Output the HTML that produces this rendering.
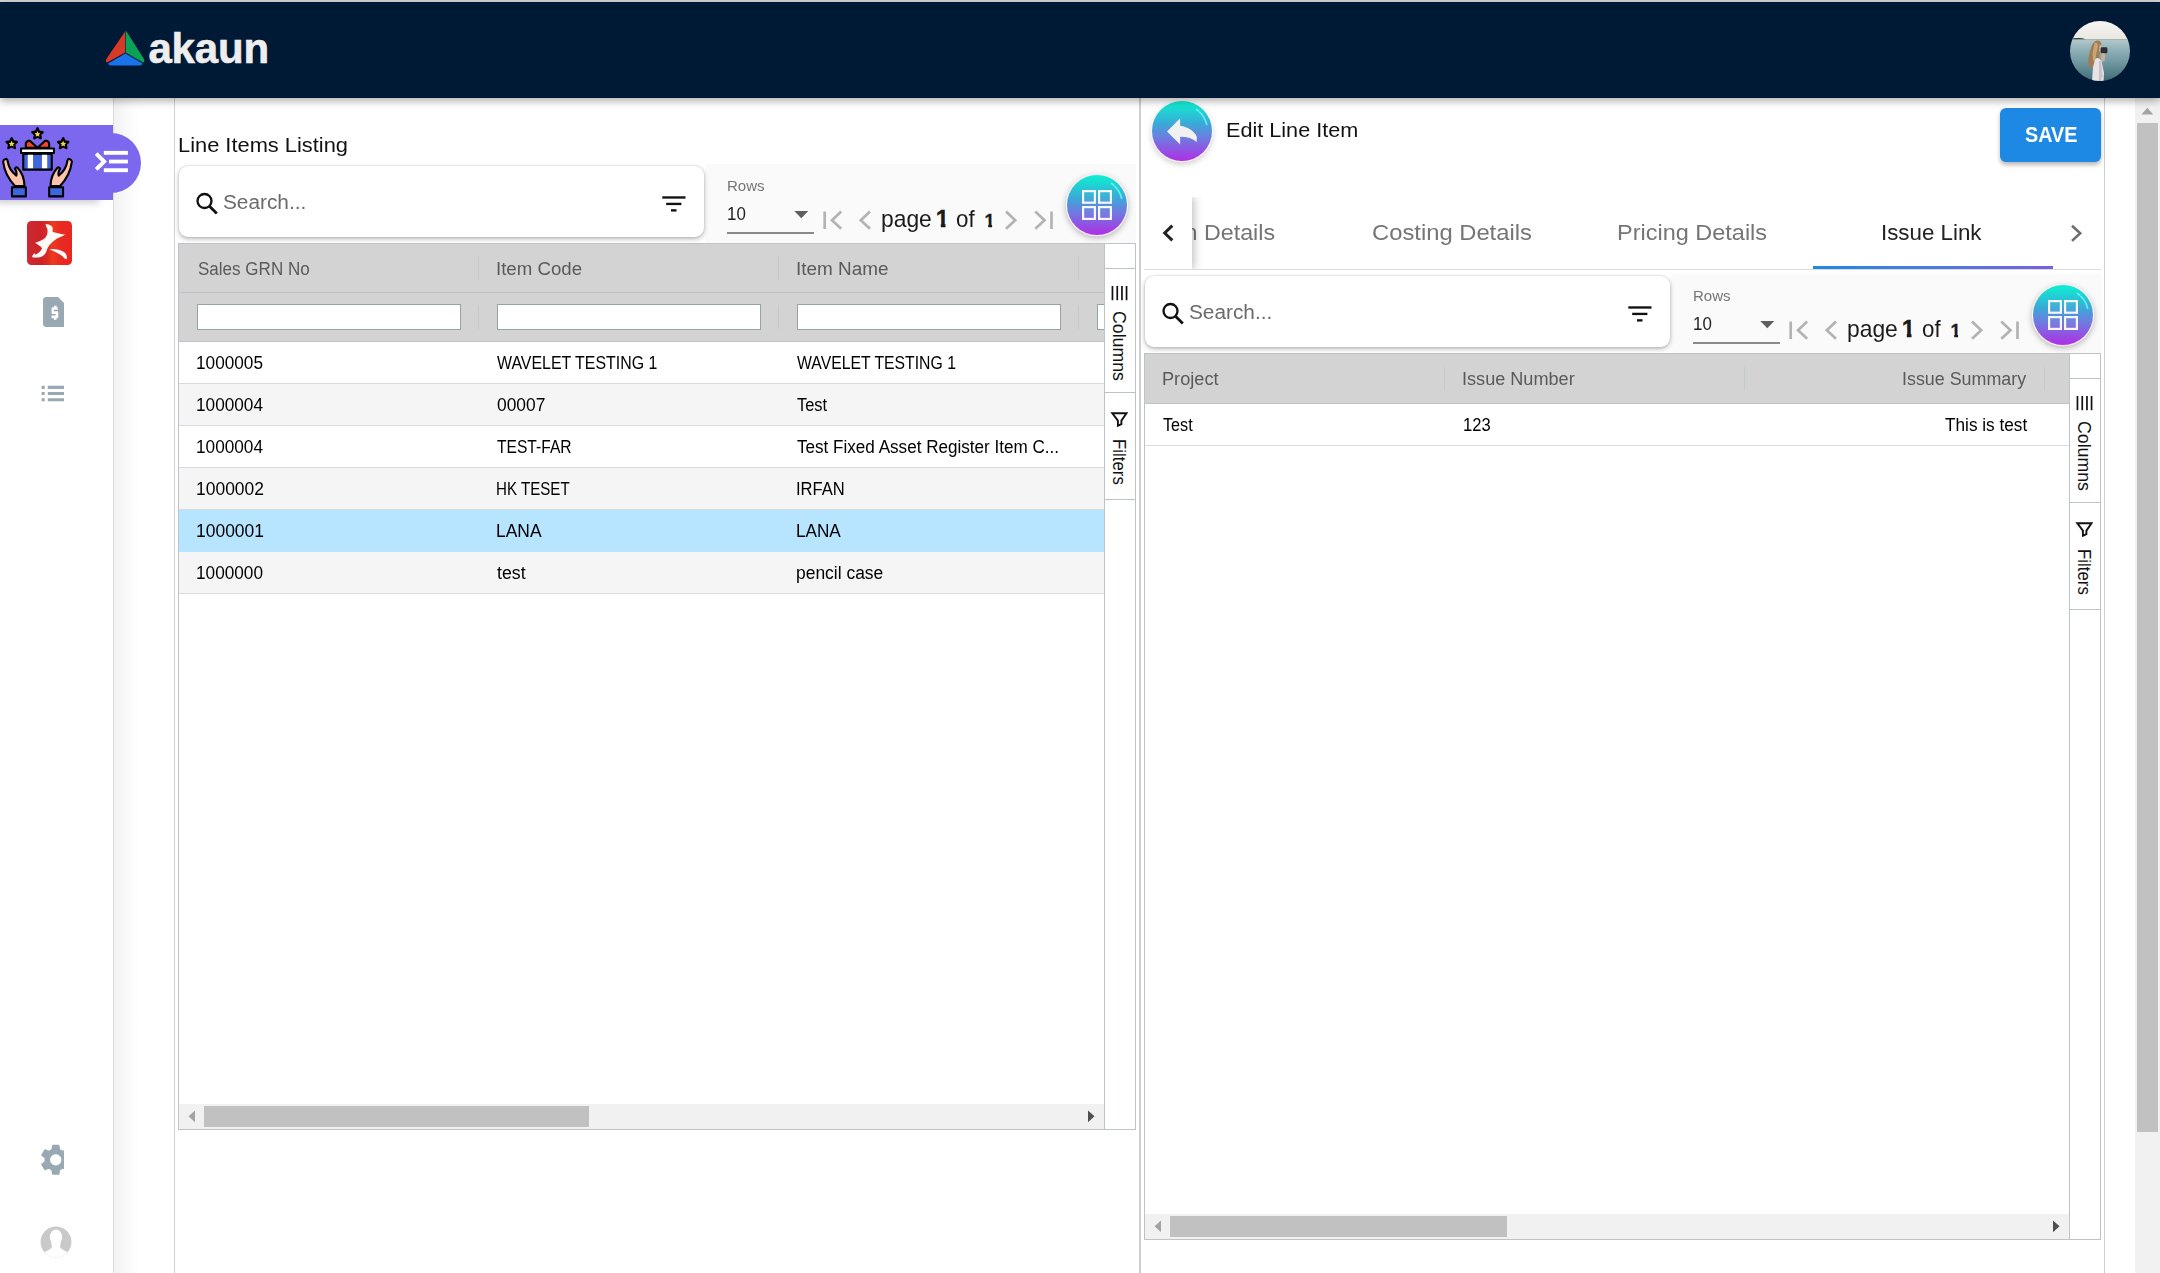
<!DOCTYPE html>
<html lang="en">
<head>
<meta charset="utf-8">
<title>akaun - Line Items</title>
<style>
*{box-sizing:border-box;margin:0;padding:0}
html,body{width:2160px;height:1273px;overflow:hidden;background:#fff}
body{font-family:"Liberation Sans",sans-serif;color:#181d1f;position:relative}
.abs{position:absolute}
/* top */
#topstrip{left:0;top:0;width:2160px;height:2px;background:#d4d4d4}
#header{left:0;top:2px;width:2160px;height:96px;background:#001935;box-shadow:0 3px 8px rgba(0,0,0,.32);z-index:20}
#brand{left:148.400px;top:21.900px;font-weight:700;font-size:42px;line-height:50px;letter-spacing:-.150px;color:#eee;-webkit-text-stroke:.6px #eee}
/* sidebar */
#sidebar{left:0;top:98px;width:114px;height:1175px;background:#fff;border-right:1px solid #dcdcdc;z-index:5}
#gutter{left:114px;top:98px;width:60px;height:1175px;background:linear-gradient(90deg,#f2f2f2 0,#f6f6f6 12%,#fbfbfb 26%,#fff 42%)}
#lline{left:174px;top:98px;width:1px;height:1175px;background:#d2d2d2}
#badge{left:0;top:125px;width:113px;height:75px;background:#7b68ee;box-shadow:-10px 6px 8px -4px rgba(0,0,0,.24);z-index:7}
#pill{left:100px;top:133px;width:41px;height:60px;background:#7b68ee;border-radius:0 30px 30px 0;z-index:8}
/* text helpers */
.pop{font-family:"Liberation Sans",sans-serif;color:#111;white-space:nowrap}
.title{font-size:21px;line-height:28px;letter-spacing:.35px}
/* search card */
.search{background:#fff;border-radius:9px;box-shadow:0 2px 5px rgba(0,0,0,.28),0 0 2px rgba(0,0,0,.18);width:525px;height:71px}
.search .ph{position:absolute;left:44px;top:22px;font-size:20px;line-height:28px;color:#6b6b6b;letter-spacing:.5px}
.pgbg{background:#fafafa;width:431px;height:79px}
.rows{font-size:14.5px;line-height:18px;color:#757575;letter-spacing:.3px}
.ten{font-size:19px;line-height:22px;color:#222}
.uline{height:2px;background:#8a8a8a;width:87px}
.pg{font-size:21.5px;line-height:28px;color:#1b1b1b;white-space:nowrap;letter-spacing:.2px}
.pg b{font-weight:700}
.fab{width:60px;height:60px;border-radius:50%;background:linear-gradient(180deg,#0af0d2 0%,#10ead0 4%,#3aa9d8 38%,#6f7be0 62%,#b02ee6 100%);box-shadow:0 0 0 1.300px rgba(255,245,255,.85),0 2px 6px 1px rgba(0,0,0,.28)}
/* grid */
.grid{border:1px solid #bdc3c7;background:#fff;overflow:hidden}
.hdr{left:0;top:0;background:#d3d3d3;border-bottom:1px solid #bdc3c7}
.hc{font-size:17.5px;line-height:24px;color:#5b5b5b;white-space:nowrap;font-weight:400}
.sep{width:1px;background:#c4c9cc}
.fin{height:26px;background:#fff;border:1px solid #95a5a6}
.row{left:0;height:42px;border-bottom:1px solid #d9dcde;width:100%}
.row.alt{background:#f5f5f5}
.row.sel{background:#b7e4ff;border-bottom-color:#b7e4ff}
.cell{top:0;font-size:17.3px;line-height:41px;color:#000;white-space:nowrap}
.hsb{background:#f1f1f1;height:25px}
.thumb{background:#c1c1c1;top:2.400px;height:20.600px}
.side{background:#fff;border-left:1px solid #bdc3c7;width:31px}
.sbtn{left:0;width:30px;border-top:1px solid #bdc3c7;border-bottom:1px solid #bdc3c7;background:#fff}
.vtxt{position:absolute;left:15px;transform-origin:0 0;transform:rotate(90deg);font-size:18.200px;line-height:22px;white-space:nowrap;color:#111}
/* tabs */
.tab{font-size:22px;line-height:30px;color:#757575;white-space:nowrap;letter-spacing:.45px}
</style>
</head>
<body>
<div id="topstrip" class="abs"></div>
<div id="header" class="abs">
  <svg class="abs" style="left:104px;top:28px" width="42" height="38" viewBox="0 0 42 38">
    <path d="M20.6 2.2 Q21.2 1 21.2 1 L21.2 22.6 L3.2 32.6 Q1 31.6 2.3 28.9 Z" fill="#d63a27"/>
    <path d="M21.8 1 Q22.6 1.3 23 2.2 L40 29 Q41 31.6 39 32.6 L21.8 22.6 Z" fill="#09a257"/>
    <path d="M21.4 23.4 L38.6 33.4 Q37.6 35.4 35.6 35.4 L7 35.4 Q4.8 35.4 4 33.4 Z" fill="#1a73e8"/>
  </svg>
  <div id="brand" class="abs">akaun</div>
  <svg class="abs" style="left:2070px;top:19px" width="60" height="60" viewBox="0 0 60 60">
    <defs>
      <clipPath id="pc"><circle cx="30" cy="30" r="30"/></clipPath>
      <linearGradient id="sea" x1="0" y1="0" x2="0" y2="1"><stop offset="0" stop-color="#b4c8cb"/><stop offset=".25" stop-color="#8fb0b7"/><stop offset=".6" stop-color="#6b939c"/><stop offset="1" stop-color="#3f6b75"/></linearGradient>
      <linearGradient id="sky" x1="0" y1="0" x2="0" y2="1"><stop offset="0" stop-color="#f6f5f2"/><stop offset="1" stop-color="#ebe7e1"/></linearGradient>
      <filter id="bl" x="-10%" y="-10%" width="120%" height="120%"><feGaussianBlur stdDeviation=".55"/></filter>
    </defs>
    <g clip-path="url(#pc)">
      <rect width="60" height="18.600" fill="url(#sky)"/>
      <rect y="18.400" width="60" height="42" fill="url(#sea)"/>
      <g filter="url(#bl)">
        <path d="M1 18.300 Q4 16.600 8 17 Q12 16.600 15.500 18.300 Z" fill="#34433f"/>
        <path d="M27 19.600 Q31 19.200 31.300 23.500 L30 30 L27.500 45.500 Q22 48.500 19 45 Q17 38 20.500 29 Q22 21 27 19.600Z" fill="#a07c54"/>
        <path d="M24.500 22 Q27.500 20.500 28 25 Q26 34 24.500 42 Q22 38 22.800 31 Z" fill="#caa574"/>
        <path d="M29.800 23.500 L31.600 25.500 L31.200 30 L29 30.500Z" fill="#dcb9a0"/>
        <rect x="30.600" y="26.300" width="6.800" height="6.200" rx="1.400" fill="#2a2e35"/>
        <path d="M31.500 32 L35.500 32.500 L34.600 40 L31 41Z" fill="#d3ad92"/>
        <path d="M25.500 37.500 Q29 36 31.500 40 L34 52 L33.500 61 L22 61 L23 46Z" fill="#e7e3e4"/>
        <path d="M29 40 L31 40 L32.500 55 L30.500 61 L29 61Z" fill="#c8c2c6"/>
      </g>
    </g>
  </svg>
</div>

<div id="sidebar" class="abs"></div>
<div id="gutter" class="abs"></div>
<div id="lline" class="abs"></div>
<div id="pill" class="abs"></div>
<div id="badge" class="abs"></div>

<!-- gift / hands icon + menu icon, drawn in zoom coords (14.4x) -->
<svg class="abs" style="left:0;top:120px;z-index:9" width="150" height="85" viewBox="0 0 2160 1224">
  <g stroke="#000" stroke-width="30" stroke-linejoin="round" stroke-linecap="round">
    <g fill="#000" stroke-width="34">
      <path d="M540 120l22 48 52 6-39 36 11 52-46-26-46 26 11-52-39-36 52-6z"/>
      <path d="M168 262l22 48 52 6-39 36 11 52-46-26-46 26 11-52-39-36 52-6z"/>
      <path d="M910 262l22 48 52 6-39 36 11 52-46-26-46 26 11-52-39-36 52-6z"/>
    </g>
    <g fill="#f4d548" stroke="none">
      <path d="M540 158l13 28 30 4-22 21 6 30-27-15-27 15 6-30-22-21 30-4z"/>
      <path d="M168 300l13 28 30 4-22 21 6 30-27-15-27 15 6-30-22-21 30-4z"/>
      <path d="M910 300l13 28 30 4-22 21 6 30-27-15-27 15 6-30-22-21 30-4z"/>
    </g>
    <path d="M540 400 L430 300 Q385 290 372 340 L372 400 Z" fill="#f2452d"/>
    <path d="M540 400 L650 300 Q695 290 708 340 L708 400 Z" fill="#f2452d"/>
    <rect x="335" y="490" width="410" height="225" fill="#3f67dd"/>
    <rect x="303" y="410" width="474" height="66" fill="#fff"/>
    <path d="M75 565 Q100 545 110 590 Q130 720 235 800 Q250 760 215 700 Q225 670 255 690 Q350 790 352 950 L215 950 Q70 800 45 600 Q50 570 75 565Z" fill="#fbc4ab"/>
    <path d="M1005 565 Q980 545 970 590 Q950 720 845 800 Q830 760 865 700 Q855 670 825 690 Q730 790 728 950 L865 950 Q1010 800 1035 600 Q1030 570 1005 565Z" fill="#fbc4ab"/>
    <rect x="172" y="968" width="200" height="132" fill="#3f67dd"/>
    <rect x="708" y="968" width="200" height="132" fill="#3f67dd"/>
  </g>
  <rect x="400" y="500" width="76" height="195" fill="#fff"/>
  <rect x="604" y="500" width="76" height="195" fill="#fff"/>
  <g fill="#fff">
    <path d="M1365 505 L1405 465 L1540 598 L1405 732 L1365 692 L1460 598 Z"/>
    <rect x="1495" y="445" width="347" height="56"/>
    <rect x="1570" y="571" width="272" height="55"/>
    <rect x="1495" y="695" width="347" height="56"/>
  </g>
</svg>

<!-- red app icon -->
<div class="abs" style="left:27px;top:221px;width:45px;height:43.500px;border-radius:4.500px;z-index:6;background:linear-gradient(90deg,#cc2a31 0,#cd2328 30%,#d92a23 45%,#ee3a1f 57%,#e72a22 75%,#ea2620 100%)"></div>
<svg class="abs" style="left:20px;top:212px;z-index:7" width="60" height="60" viewBox="0 0 1273 1273">
  <g fill="#fffaf8">
    <path d="M545 262 C600 250 680 290 692 330 C700 370 680 400 700 425 C780 450 880 470 962 480 C900 520 790 555 720 610 C650 670 600 720 575 790 C550 880 500 950 400 965 L285 968 C255 960 250 940 270 915 L305 870 L325 905 C400 880 440 830 470 770 C430 720 370 690 320 655 C380 625 470 600 520 560 C570 520 590 450 585 380 C580 330 540 300 545 262 Z"/>
    <path d="M630 790 C730 775 850 800 930 850 C990 890 1010 960 985 1000 C960 1005 940 980 900 940 C830 880 740 840 630 790 Z"/>
  </g>
</svg>

<!-- clipped material icons -->
<div class="abs" style="left:37px;top:290px;width:27px;height:140px;overflow:hidden;z-index:6">
  <svg class="abs" style="left:0.100px;top:4px" width="36" height="36" viewBox="0 0 24 24"><path fill="#98a9b4" d="M14 2H6c-1.100 0-2 .9-2 2v16c0 1.100.9 2 2 2h12c1.100 0 2-.9 2-2V8l-6-6z"/><path fill="#fff" d="M13.800 10.500h-2.600v1h2.200c.5 0 .8.400.8.800v3c0 .5-.4.800-.8.800H13v1h-1.700v-1H9.700v-1.700h2.800v-1h-2c-.5 0-.8-.4-.8-.8v-2.900c0-.5.4-.8.800-.8h.8v-1H13v1h.8v1.600z"/></svg>
  <svg class="abs" style="left:0.100px;top:85.300px" width="37" height="37" viewBox="0 0 24 24"><path fill="#98a9b4" d="M3 13h2v-2H3v2zm0 4h2v-2H3v2zm0-8h2V7H3v2zm4 4h14v-2H7v2zm0 4h14v-2H7v2zM7 7v2h14V7H7z"/></svg>
</div>
<div class="abs" style="left:36px;top:1138px;width:28px;height:44px;overflow:hidden;z-index:6">
  <svg class="abs" style="left:0.750px;top:3.200px" width="37.500" height="37.500" viewBox="0 0 24 24"><path fill="#98a9b4" d="M19.140,12.940c0.040-0.300,0.060-0.610,0.060-0.940c0-0.320-0.020-0.640-0.070-0.940l2.030-1.580c0.180-0.140,0.230-0.410,0.120-0.610 l-1.920-3.320c-0.120-0.220-0.370-0.290-0.590-0.220l-2.390,0.960c-0.500-0.380-1.030-0.700-1.620-0.940L14.400,2.810c-0.040-0.240-0.240-0.410-0.480-0.410 h-3.840c-0.240,0-0.430,0.170-0.470,0.410L9.250,5.350C8.660,5.590,8.120,5.920,7.630,6.290L5.240,5.330c-0.220-0.080-0.470,0-0.590,0.220L2.740,8.870 C2.620,9.080,2.660,9.340,2.860,9.480l2.030,1.580C4.840,11.360,4.800,11.690,4.800,12s0.020,0.640,0.070,0.940l-2.030,1.580 c-0.180,0.140-0.230,0.410-0.120,0.610l1.920,3.320c0.120,0.220,0.370,0.290,0.590,0.220l2.390-0.960c0.500,0.380,1.030,0.700,1.620,0.940l0.360,2.540 c0.050,0.240,0.240,0.410,0.480,0.410h3.840c0.240,0,0.440-0.170,0.470-0.410l0.360-2.540c0.590-0.240,1.130-0.560,1.620-0.940l2.390,0.960 c0.220,0.080,0.470,0,0.590-0.220l1.920-3.320c0.120-0.220,0.070-0.470-0.120-0.610L19.140,12.940z M12,15.600c-1.980,0-3.600-1.620-3.600-3.600 s1.620-3.600,3.600-3.600s3.600,1.620,3.600,3.600S13.980,15.600,12,15.600z"/></svg>
</div>
<!-- default avatar -->
<svg class="abs" style="left:40.300px;top:1226.200px;z-index:6" width="32" height="32" viewBox="0 0 32 32">
  <defs><clipPath id="avc"><circle cx="16" cy="16" r="15.400"/></clipPath></defs>
  <circle cx="16" cy="16" r="15.400" fill="#c9c9c9"/>
  <g clip-path="url(#avc)" fill="#fff">
    <ellipse cx="16" cy="11" rx="6.200" ry="7.600"/>
    <path d="M11.300 14 Q11 19.500 12.200 20.500 Q10.500 24 3 26.400 L0 33 L32 33 L29 26.400 Q21.500 24 19.800 20.500 Q21 19.500 20.700 14 Z"/>
  </g>
</svg>


<div class="abs" style="left:177.93px;top:131.80px;font-size:20.4px;line-height:27px;transform-origin:0 0;transform:scaleX(1.0710);color:#111;z-index:3;white-space:nowrap">Line Items Listing</div>
<div class="abs pgbg" style="left:705px;top:164px"></div>
<div class="abs" style="left:727.13px;top:176.70px;font-size:14px;line-height:18px;transform-origin:0 0;transform:scaleX(1.0733);color:#757575;z-index:3;white-space:nowrap">Rows</div>
<div class="abs" style="left:727.09px;top:201.80px;font-size:18.6px;line-height:24px;transform-origin:0 0;transform:scaleX(0.9100);color:#222;z-index:3;white-space:nowrap">10</div>
<svg class="abs" style="left:794px;top:211px" width="15" height="8" viewBox="0 0 15 8"><path d="M0.3 0 H14.3 L7.3 7.2 Z" fill="#5f5f5f"/></svg>
<div class="abs uline" style="left:727px;top:231.7px"></div>
<svg class="abs" style="left:820px;top:208px" width="240" height="24" viewBox="0 0 240 24" fill="none" stroke="#b3b3b3" stroke-width="2.700"><path d="M4.7 3.5V21"/><path d="M21.2 3.6 L12 12.2 L21.2 20.8"/><path d="M50 3.6 L40.8 12.2 L50 20.8"/><path d="M186 3.6 L195.200 12.200 L186 20.800"/><path d="M215.300 3.600 L224.500 12.200 L215.300 20.800"/><path d="M231.500 3.500V21"/></svg>
<div class="abs" style="left:880.85px;top:202.80px;font-size:24px;line-height:31px;transform-origin:0 0;transform:scaleX(0.9511);color:#1b1b1b;z-index:3;white-space:nowrap">page</div>
<div class="abs" style="left:935.87px;top:202.80px;font-size:23.77px;line-height:31px;font-weight:700;color:#1b1b1b;z-index:3;-webkit-text-stroke:0.35px #1b1b1b;clip-path:polygon(0 0,9.63px 0,9.63px 100%,4.94px 100%,4.94px 52%,0 52%)">1</div>
<div class="abs" style="left:955.67px;top:202.80px;font-size:24px;line-height:31px;transform-origin:0 0;transform:scaleX(0.9303);color:#1b1b1b;z-index:3;white-space:nowrap">of</div>
<div class="abs" style="left:984.59px;top:208.80px;font-size:18.12px;line-height:24px;font-weight:700;color:#1b1b1b;z-index:3;-webkit-text-stroke:0.3px #1b1b1b;clip-path:polygon(0 0,7.51px 0,7.51px 100%,3.66px 100%,3.66px 52%,0 52%)">1</div>
<div class="abs fab" style="left:1067px;top:175px"></div>
<svg class="abs" style="left:1067px;top:175px" width="60" height="60" viewBox="0 0 60 60"><g fill="rgba(255,255,255,.04)" stroke="#f6f6f6" stroke-width="2.200"><rect x="16.100" y="16.100" width="11.800" height="11.600"/><rect x="32.100" y="16.100" width="11.800" height="11.600"/><rect x="16.100" y="32.100" width="11.800" height="11.800"/><rect x="32.100" y="32.100" width="11.800" height="11.800"/></g><path d="M44.500 8.500 Q52.500 14 54.700 23.500" fill="none" stroke="rgba(130,255,250,.7)" stroke-width="1.700" stroke-dasharray="2.500 1.800 30" stroke-linecap="round"/></svg>
<div class="abs" style="left:223.10px;top:189.30px;font-size:20px;line-height:26px;transform-origin:0 0;transform:scaleX(1.0397);color:#6b6b6b;z-index:4;white-space:nowrap">Search...</div>
<div class="abs search" style="left:179px;top:166px">
  <svg class="abs" style="left:14.200px;top:24px" width="28" height="28" viewBox="0 0 28 28"><circle cx="11.500" cy="11" r="7" fill="none" stroke="#111" stroke-width="2.300"/><path d="M16.500 16.200 L23.800 23.500" stroke="#111" stroke-width="2.800" stroke-linecap="butt"/></svg>
  <svg class="abs" style="left:480px;top:28px" width="30" height="20" viewBox="0 0 30 20"><g fill="#111"><rect x="3.300" y="2.300" width="23.200" height="2.350"/><rect x="7.200" y="8.750" width="15.200" height="2.350"/><rect x="12" y="15.200" width="5.500" height="2.350"/></g></svg>
</div>
<div class="abs grid" style="left:178px;top:243px;width:958px;height:887px">
<div class="abs hdr" style="width:925px;height:49px"></div>
<div class="abs hdr" style="top:49px;width:925px;height:49px"></div>
<div class="abs sep" style="left:299px;top:12px;height:24px"></div>
<div class="abs sep" style="left:299px;top:61px;height:24px"></div>
<div class="abs fin" style="left:18px;top:60px;width:264px"></div>
<div class="abs sep" style="left:599px;top:12px;height:24px"></div>
<div class="abs sep" style="left:599px;top:61px;height:24px"></div>
<div class="abs fin" style="left:318px;top:60px;width:264px"></div>
<div class="abs sep" style="left:899px;top:12px;height:24px"></div>
<div class="abs sep" style="left:899px;top:61px;height:24px"></div>
<div class="abs fin" style="left:618px;top:60px;width:264px"></div>
<div class="abs fin" style="left:918px;top:60px;width:264px"></div>
<div class="abs row " style="top:98px"></div>
<div class="abs row alt" style="top:140px"></div>
<div class="abs row " style="top:182px"></div>
<div class="abs row alt" style="top:224px"></div>
<div class="abs row sel" style="top:266px"></div>
<div class="abs row alt" style="top:308px"></div>
<div class="abs hsb" style="left:0;top:860px;width:925px"><svg class="abs" style="left:9px;top:6px" width="8" height="13" viewBox="0 0 8 13"><path d="M7 0.500 V12.200 L0.500 6.300Z" fill="#a3a3a3"/></svg><div class="abs thumb" style="left:25px;width:385px"></div><svg class="abs" style="left:908px;top:6px" width="8" height="13" viewBox="0 0 8 13"><path d="M1 0.500 V12.200 L7.500 6.300Z" fill="#505050"/></svg></div>
<div class="abs side" style="left:925px;top:0;height:885px">
<div class="abs sbtn" style="top:24px;height:125px"><svg class="abs" style="left:5.700px;top:16.600px" width="18" height="15" viewBox="0 0 18 15"><g fill="#111"><rect x="0.600" y="0" width="1.700" height="14.200"/><rect x="5.400" y="0" width="1.700" height="14.200"/><rect x="10.100" y="0" width="1.700" height="14.200"/><rect x="14.700" y="0" width="1.700" height="14.200"/></g></svg><div class="vtxt" style="left:25.300px;top:41.500px;transform:rotate(90deg) scaleX(.975)">Columns</div></div>
<div class="abs sbtn" style="top:148px;height:108px"><svg class="abs" style="left:5px;top:17px" width="20" height="18" viewBox="0 0 20 18"><path d="M2.300 3.300 H16.500 L11.400 10.600 V14.200 L7.900 15.700 V10.600 Z" fill="none" stroke="#111" stroke-width="1.900" stroke-linejoin="miter"/></svg><div class="vtxt" style="left:25.300px;top:45.800px;transform:rotate(90deg) scaleX(.925)">Filters</div></div>
</div>
</div>
<div class="abs" style="left:197.60px;top:257.80px;font-size:17.6px;line-height:23px;transform-origin:0 0;transform:scaleX(0.9681);color:#5a5a5a;z-index:3;white-space:nowrap">Sales GRN No</div>
<div class="abs" style="left:495.74px;top:257.80px;font-size:17.6px;line-height:23px;transform-origin:0 0;transform:scaleX(1.0607);color:#5a5a5a;z-index:3;white-space:nowrap">Item Code</div>
<div class="abs" style="left:796.02px;top:257.80px;font-size:17.6px;line-height:23px;transform-origin:0 0;transform:scaleX(1.0754);color:#5a5a5a;z-index:3;white-space:nowrap">Item Name</div>
<div class="abs" style="left:196.32px;top:351.70px;font-size:17.6px;line-height:23px;transform-origin:0 0;transform:scaleX(0.9777);color:#000;z-index:3;white-space:nowrap">1000005</div>
<div class="abs" style="left:497.00px;top:351.70px;font-size:17.6px;line-height:23px;transform-origin:0 0;transform:scaleX(0.9044);color:#000;z-index:3;white-space:nowrap">WAVELET TESTING 1</div>
<div class="abs" style="left:797.20px;top:351.70px;font-size:17.6px;line-height:23px;transform-origin:0 0;transform:scaleX(0.8965);color:#000;z-index:3;white-space:nowrap">WAVELET TESTING 1</div>
<div class="abs" style="left:196.32px;top:393.70px;font-size:17.6px;line-height:23px;transform-origin:0 0;transform:scaleX(0.9777);color:#000;z-index:3;white-space:nowrap">1000004</div>
<div class="abs" style="left:497.00px;top:393.70px;font-size:17.6px;line-height:23px;transform-origin:0 0;transform:scaleX(0.9888);color:#000;z-index:3;white-space:nowrap">00007</div>
<div class="abs" style="left:797.20px;top:393.70px;font-size:17.6px;line-height:23px;transform-origin:0 0;transform:scaleX(0.9327);color:#000;z-index:3;white-space:nowrap">Test</div>
<div class="abs" style="left:196.32px;top:435.70px;font-size:17.6px;line-height:23px;transform-origin:0 0;transform:scaleX(0.9777);color:#000;z-index:3;white-space:nowrap">1000004</div>
<div class="abs" style="left:497.00px;top:435.70px;font-size:17.6px;line-height:23px;transform-origin:0 0;transform:scaleX(0.8877);color:#000;z-index:3;white-space:nowrap">TEST-FAR</div>
<div class="abs" style="left:797.20px;top:435.70px;font-size:17.6px;line-height:23px;transform-origin:0 0;transform:scaleX(0.9713);color:#000;z-index:3;white-space:nowrap">Test Fixed Asset Register Item C...</div>
<div class="abs" style="left:196.31px;top:477.70px;font-size:17.6px;line-height:23px;transform-origin:0 0;transform:scaleX(0.9924);color:#000;z-index:3;white-space:nowrap">1000002</div>
<div class="abs" style="left:496.14px;top:477.70px;font-size:17.6px;line-height:23px;transform-origin:0 0;transform:scaleX(0.8595);color:#000;z-index:3;white-space:nowrap">HK TESET</div>
<div class="abs" style="left:796.26px;top:477.70px;font-size:17.6px;line-height:23px;transform-origin:0 0;transform:scaleX(0.9400);color:#000;z-index:3;white-space:nowrap">IRFAN</div>
<div class="abs" style="left:196.31px;top:519.70px;font-size:17.6px;line-height:23px;transform-origin:0 0;transform:scaleX(0.9924);color:#000;z-index:3;white-space:nowrap">1000001</div>
<div class="abs" style="left:496.01px;top:519.70px;font-size:17.6px;line-height:23px;transform-origin:0 0;transform:scaleX(0.9906);color:#000;z-index:3;white-space:nowrap">LANA</div>
<div class="abs" style="left:796.22px;top:519.70px;font-size:17.6px;line-height:23px;transform-origin:0 0;transform:scaleX(0.9751);color:#000;z-index:3;white-space:nowrap">LANA</div>
<div class="abs" style="left:196.32px;top:561.70px;font-size:17.6px;line-height:23px;transform-origin:0 0;transform:scaleX(0.9777);color:#000;z-index:3;white-space:nowrap">1000000</div>
<div class="abs" style="left:497.00px;top:561.70px;font-size:17.6px;line-height:23px;transform-origin:0 0;transform:scaleX(1.0081);color:#000;z-index:3;white-space:nowrap">test</div>
<div class="abs" style="left:796.21px;top:561.70px;font-size:17.6px;line-height:23px;transform-origin:0 0;transform:scaleX(0.9915);color:#000;z-index:3;white-space:nowrap">pencil case</div>

<div class="abs" style="left:1139px;top:98px;width:2px;height:1175px;background:#cfcfcf"></div>
<div class="abs" style="left:2104px;top:98px;width:1px;height:1175px;background:#cfcfcf"></div>
<div class="abs" style="left:2135px;top:98px;width:25px;height:1175px;background:#f1f1f1"></div>
<div class="abs" style="left:2137px;top:123px;width:21px;height:1009px;background:#c1c1c1"></div>
<svg class="abs" style="left:2141px;top:107px" width="13" height="8" viewBox="0 0 13 8"><path d="M0.500 7.500 H12.200 L6.300 0.700Z" fill="#a3a3a3"/></svg>
<div class="abs fab" style="left:1152px;top:101px;box-shadow:0 0 0 1.300px rgba(255,245,255,.85),0 3px 6px rgba(0,0,0,.22)"></div>
<svg class="abs" style="left:1152px;top:101px" width="60" height="60" viewBox="0 0 60 60"><defs><clipPath id="rc"><rect x="0" y="0" width="18.850" height="24"/></clipPath></defs><g transform="translate(9.400,7.900) scale(1.875)" clip-path="url(#rc)"><path fill="#f1f1f1" d="M10 9V5l-7 7 7 7v-4.100c5 0 8.500 1.600 11 5.100-1-5-4-10-11-11z"/></g><path d="M44.500 8.500 Q52.500 14 54.700 23.500" fill="none" stroke="rgba(130,255,250,.7)" stroke-width="1.700" stroke-dasharray="2.500 1.800 30" stroke-linecap="round"/></svg>
<div class="abs" style="left:1225.51px;top:116.80px;font-size:19.8px;line-height:26px;transform-origin:0 0;transform:scaleX(1.0932);color:#111;z-index:3;white-space:nowrap">Edit Line Item</div>
<div class="abs" style="left:2000px;top:108px;width:101px;height:54px;border-radius:6px;background:#1e88e5;box-shadow:0 3px 4px rgba(0,0,0,.28);"></div>
<div class="abs" style="left:2024.50px;top:120.80px;font-size:21.8px;line-height:28px;transform-origin:0 0;transform:scaleX(0.9073);color:#fff;z-index:3;white-space:nowrap;font-weight:700">SAVE</div>
<div class="abs" style="left:1144px;top:269px;width:957px;height:1px;background:#dcdcdc"></div>
<div class="abs" style="left:1144px;top:197px;width:957px;height:72px;overflow:hidden">
<div class="abs" style="left:2.62px;top:21.20px;font-size:22px;line-height:29px;transform-origin:0 0;transform:scaleX(1.0582);color:#757575;z-index:0;white-space:nowrap">Main Details</div>
<div class="abs" style="left:228.22px;top:21.20px;font-size:22px;line-height:29px;transform-origin:0 0;transform:scaleX(1.0806);color:#757575;z-index:0;white-space:nowrap">Costing Details</div>
<div class="abs" style="left:472.93px;top:21.20px;font-size:22px;line-height:29px;transform-origin:0 0;transform:scaleX(1.0673);color:#757575;z-index:0;white-space:nowrap">Pricing Details</div>
<div class="abs" style="left:736.97px;top:21.20px;font-size:22px;line-height:29px;transform-origin:0 0;transform:scaleX(1.0147);color:#222;z-index:0;white-space:nowrap">Issue Link</div>
<div class="abs" style="left:669px;top:69px;width:240px;height:3px;background:linear-gradient(90deg,#1e88e5 0,#4a7be6 50%,#7a5ee6 100%)"></div>
<div class="abs" style="left:-4px;top:0;width:52px;height:72px;background:#fff;box-shadow:2px 0 9px rgba(0,0,0,.26)"></div>
<svg class="abs" style="left:14px;top:24px" width="20" height="24" viewBox="0 0 20 24"><path d="M14.300 4.700 L6.700 12 L14.300 19.300" fill="none" stroke="#222" stroke-width="3"/></svg>
<svg class="abs" style="left:922px;top:24px" width="20" height="24" viewBox="0 0 20 24"><path d="M6 4.700 L14.200 12.300 L6 19.900" fill="none" stroke="#6e6e6e" stroke-width="2.600"/></svg>
</div>
<div class="abs pgbg" style="left:1671px;top:274px"></div>
<div class="abs" style="left:1693.13px;top:286.70px;font-size:14px;line-height:18px;transform-origin:0 0;transform:scaleX(1.0733);color:#757575;z-index:3;white-space:nowrap">Rows</div>
<div class="abs" style="left:1693.09px;top:311.80px;font-size:18.6px;line-height:24px;transform-origin:0 0;transform:scaleX(0.9100);color:#222;z-index:3;white-space:nowrap">10</div>
<svg class="abs" style="left:1760px;top:321px" width="15" height="8" viewBox="0 0 15 8"><path d="M0.3 0 H14.3 L7.3 7.2 Z" fill="#5f5f5f"/></svg>
<div class="abs uline" style="left:1693px;top:341.7px"></div>
<svg class="abs" style="left:1786px;top:318px" width="240" height="24" viewBox="0 0 240 24" fill="none" stroke="#b3b3b3" stroke-width="2.700"><path d="M4.7 3.5V21"/><path d="M21.2 3.6 L12 12.2 L21.2 20.8"/><path d="M50 3.6 L40.8 12.2 L50 20.8"/><path d="M186 3.6 L195.200 12.200 L186 20.800"/><path d="M215.300 3.600 L224.500 12.200 L215.300 20.800"/><path d="M231.500 3.500V21"/></svg>
<div class="abs" style="left:1846.85px;top:312.80px;font-size:24px;line-height:31px;transform-origin:0 0;transform:scaleX(0.9511);color:#1b1b1b;z-index:3;white-space:nowrap">page</div>
<div class="abs" style="left:1901.87px;top:312.80px;font-size:23.77px;line-height:31px;font-weight:700;color:#1b1b1b;z-index:3;-webkit-text-stroke:0.35px #1b1b1b;clip-path:polygon(0 0,9.63px 0,9.63px 100%,4.94px 100%,4.94px 52%,0 52%)">1</div>
<div class="abs" style="left:1921.67px;top:312.80px;font-size:24px;line-height:31px;transform-origin:0 0;transform:scaleX(0.9303);color:#1b1b1b;z-index:3;white-space:nowrap">of</div>
<div class="abs" style="left:1950.59px;top:318.80px;font-size:18.12px;line-height:24px;font-weight:700;color:#1b1b1b;z-index:3;-webkit-text-stroke:0.3px #1b1b1b;clip-path:polygon(0 0,7.51px 0,7.51px 100%,3.66px 100%,3.66px 52%,0 52%)">1</div>
<div class="abs fab" style="left:2033px;top:285px"></div>
<svg class="abs" style="left:2033px;top:285px" width="60" height="60" viewBox="0 0 60 60"><g fill="rgba(255,255,255,.04)" stroke="#f6f6f6" stroke-width="2.200"><rect x="16.100" y="16.100" width="11.800" height="11.600"/><rect x="32.100" y="16.100" width="11.800" height="11.600"/><rect x="16.100" y="32.100" width="11.800" height="11.800"/><rect x="32.100" y="32.100" width="11.800" height="11.800"/></g><path d="M44.500 8.500 Q52.500 14 54.700 23.500" fill="none" stroke="rgba(130,255,250,.7)" stroke-width="1.700" stroke-dasharray="2.500 1.800 30" stroke-linecap="round"/></svg>
<div class="abs" style="left:1189.10px;top:299.30px;font-size:20px;line-height:26px;transform-origin:0 0;transform:scaleX(1.0397);color:#6b6b6b;z-index:4;white-space:nowrap">Search...</div>
<div class="abs search" style="left:1145px;top:276px">
  <svg class="abs" style="left:14.200px;top:24px" width="28" height="28" viewBox="0 0 28 28"><circle cx="11.500" cy="11" r="7" fill="none" stroke="#111" stroke-width="2.300"/><path d="M16.500 16.200 L23.800 23.500" stroke="#111" stroke-width="2.800" stroke-linecap="butt"/></svg>
  <svg class="abs" style="left:480px;top:28px" width="30" height="20" viewBox="0 0 30 20"><g fill="#111"><rect x="3.300" y="2.300" width="23.200" height="2.350"/><rect x="7.200" y="8.750" width="15.200" height="2.350"/><rect x="12" y="15.200" width="5.500" height="2.350"/></g></svg>
</div>
<div class="abs grid" style="left:1144px;top:353px;width:957px;height:887px">
<div class="abs hdr" style="width:924px;height:50px"></div>
<div class="abs sep" style="left:299px;top:13px;height:24px"></div>
<div class="abs sep" style="left:599px;top:13px;height:24px"></div>
<div class="abs sep" style="left:899px;top:13px;height:24px"></div>
<div class="abs row" style="top:50px"></div>
<div class="abs hsb" style="left:0;top:860px;width:924px"><svg class="abs" style="left:9px;top:6px" width="8" height="13" viewBox="0 0 8 13"><path d="M7 0.500 V12.200 L0.500 6.300Z" fill="#a3a3a3"/></svg><div class="abs thumb" style="left:25px;width:337px"></div><svg class="abs" style="left:907px;top:6px" width="8" height="13" viewBox="0 0 8 13"><path d="M1 0.500 V12.200 L7.500 6.300Z" fill="#505050"/></svg></div>
<div class="abs side" style="left:924px;top:0;height:885px">
<div class="abs sbtn" style="top:24px;height:125px"><svg class="abs" style="left:5.700px;top:16.600px" width="18" height="15" viewBox="0 0 18 15"><g fill="#111"><rect x="0.600" y="0" width="1.700" height="14.200"/><rect x="5.400" y="0" width="1.700" height="14.200"/><rect x="10.100" y="0" width="1.700" height="14.200"/><rect x="14.700" y="0" width="1.700" height="14.200"/></g></svg><div class="vtxt" style="left:25.300px;top:41.500px;transform:rotate(90deg) scaleX(.975)">Columns</div></div>
<div class="abs sbtn" style="top:148px;height:108px"><svg class="abs" style="left:5px;top:17px" width="20" height="18" viewBox="0 0 20 18"><path d="M2.300 3.300 H16.500 L11.400 10.600 V14.200 L7.900 15.700 V10.600 Z" fill="none" stroke="#111" stroke-width="1.900" stroke-linejoin="miter"/></svg><div class="vtxt" style="left:25.300px;top:45.800px;transform:rotate(90deg) scaleX(.925)">Filters</div></div>
</div>
</div>
<div class="abs" style="left:1162.27px;top:367.90px;font-size:17.6px;line-height:23px;transform-origin:0 0;transform:scaleX(1.0321);color:#5a5a5a;z-index:3;white-space:nowrap">Project</div>
<div class="abs" style="left:1462.27px;top:367.90px;font-size:17.6px;line-height:23px;transform-origin:0 0;transform:scaleX(1.0289);color:#5a5a5a;z-index:3;white-space:nowrap">Issue Number</div>
<div class="abs" style="left:1902.08px;top:367.90px;font-size:17.6px;line-height:23px;transform-origin:0 0;transform:scaleX(1.0155);color:#5a5a5a;z-index:3;white-space:nowrap">Issue Summary</div>
<div class="abs" style="left:1162.90px;top:413.60px;font-size:17.6px;line-height:23px;transform-origin:0 0;transform:scaleX(0.9204);color:#000;z-index:3;white-space:nowrap">Test</div>
<div class="abs" style="left:1462.56px;top:413.60px;font-size:17.6px;line-height:23px;transform-origin:0 0;transform:scaleX(0.9416);color:#000;z-index:3;white-space:nowrap">123</div>
<div class="abs" style="left:1944.70px;top:413.60px;font-size:17.6px;line-height:23px;transform-origin:0 0;transform:scaleX(0.9776);color:#000;z-index:3;white-space:nowrap">This is test</div>

</body>
</html>
